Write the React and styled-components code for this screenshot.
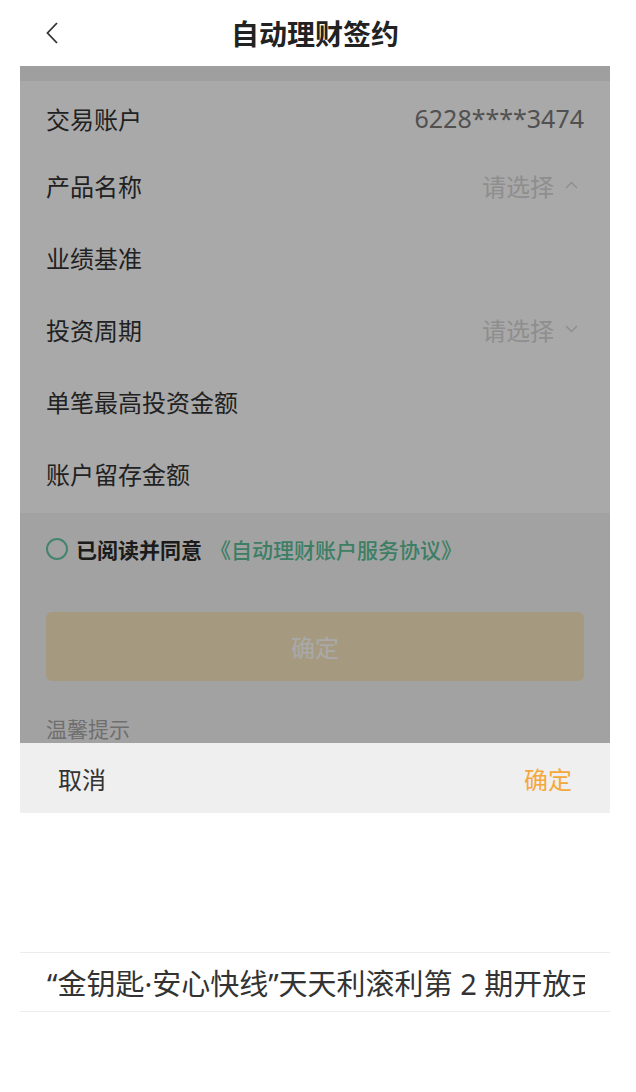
import React from 'react'
import styled, { createGlobalStyle } from 'styled-components'

const GlobalStyle = createGlobalStyle`
  body {
    margin: 0;
    background: #fff;
    font-family: "Noto Sans CJK SC", "Noto Sans", sans-serif;
  }
`

const Phone = styled.div`
  position: relative;
  width: 590px;
  height: 1092px;
  margin-left: 20px;
  overflow: hidden;
  background: #fff;
`

const Header = styled.header`
  position: relative;
  height: 66px;
  display: flex;
  align-items: center;
  justify-content: center;
  background: #fff;
`

const BackBtn = styled.button`
  position: absolute;
  left: 25px;
  top: 21px;
  padding: 0;
  border: 0;
  background: none;
  display: flex;
`

const Title = styled.h1`
  margin: 0;
  font-size: 28px;
  font-weight: 700;
  color: #222;
`

const Form = styled.section`
  border-top: 15px solid #f0f0f0;
  background: #fff;
`

const Row = styled.div`
  height: 72px;
  padding: 0 26px;
  display: flex;
  align-items: center;
  justify-content: space-between;
  box-sizing: border-box;

  &:first-child {
    height: 68px;
    padding-top: 6px;
  }
  &:last-child {
    height: 76px;
    padding-bottom: 4px;
  }
`

const Label = styled.span`
  font-size: 24px;
  color: #333;
`

const Value = styled.span`
  display: flex;
  align-items: center;
  gap: 11px;
  font-size: ${p => (p.$num ? '25px' : '24px')};
  font-family: ${p => (p.$num ? '"Noto Sans", sans-serif' : 'inherit')};
  color: ${p => (p.$muted ? '#d6d6d6' : '#7a7a7a')};
`

const CaretBox = styled.span`
  display: flex;
  padding-right: 6px;
`

const AgreeSection = styled.section`
  background: #f5f5f5;
  padding: 21px 26px 0;
`

const AgreeRow = styled.div`
  display: flex;
  align-items: center;
  gap: 8px;
  font-size: 21px;
`

const Circle = styled.span`
  width: 18px;
  height: 18px;
  border: 2px solid #66c7a8;
  border-radius: 50%;
`

const AgreeText = styled.span`
  font-weight: 700;
  color: #2a2a2a;
`

const Link = styled.span`
  color: #5cbf98;
  font-weight: 500;
`

const SubmitBtn = styled.button`
  width: 100%;
  height: 69px;
  margin-top: 48px;
  border: 0;
  border-radius: 6px;
  background: #f9e8c1;
  color: #fff;
  font-family: inherit;
  font-size: 24px;
`

const Tips = styled.p`
  margin: 32px 0 0;
  font-size: 21px;
  color: #a8a8a8;
`

const Mask = styled.div`
  position: absolute;
  top: 66px;
  left: 0;
  right: 0;
  bottom: 0;
  background: rgba(0, 0, 0, 0.337);
`

const Sheet = styled.div`
  position: absolute;
  top: 743px;
  left: 0;
  right: 0;
  bottom: 0;
  background: #fff;
`

const SheetBar = styled.div`
  height: 70px;
  padding: 0 38px;
  display: flex;
  align-items: center;
  justify-content: space-between;
  background: #efefef;
`

const SheetAction = styled.span`
  font-size: 24px;
  color: ${p => (p.$primary ? '#f5a83a' : '#333')};
`

const Picker = styled.div`
  padding-top: 139px;
`

const PickerItem = styled.div`
  height: 58px;
  display: flex;
  align-items: center;
  border-top: 1px solid #ececec;
  border-bottom: 1px solid #ececec;
`

const PickerText = styled.span`
  display: block;
  margin: 0 25px 0 27px;
  overflow: hidden;
  white-space: nowrap;
  font-family: "Noto Sans", "Noto Sans CJK SC", sans-serif;
  font-size: 29px;
  color: #333;
`

const Caret = ({ up }) => (
  <CaretBox>
    <svg width="13" height="8" viewBox="0 0 13 8">
      <path
        d={up ? 'M1 7 L6.5 1.5 L12 7' : 'M1 1 L6.5 6.5 L12 1'}
        fill="none"
        stroke="#d6d6d6"
        strokeWidth="1.4"
      />
    </svg>
  </CaretBox>
)

const rows = [
  { label: '交易账户', value: '6228****3474', num: true },
  { label: '产品名称', value: '请选择', caret: 'up' },
  { label: '业绩基准' },
  { label: '投资周期', value: '请选择', caret: 'down' },
  { label: '单笔最高投资金额' },
  { label: '账户留存金额' },
]

const App = () => {
  return (
    <Phone>
      <GlobalStyle />
      <Header>
        <BackBtn>
          <svg width="14" height="24" viewBox="0 0 14 24">
            <path d="M12 2 L2.5 12 L12 22" fill="none" stroke="#333" strokeWidth="1.8" />
          </svg>
        </BackBtn>
        <Title>自动理财签约</Title>
      </Header>

      <Form>
        {rows.map(r => (
          <Row key={r.label}>
            <Label>{r.label}</Label>
            {r.value && (
              <Value $num={r.num} $muted={!!r.caret}>
                {r.value}
                {r.caret && <Caret up={r.caret === 'up'} />}
              </Value>
            )}
          </Row>
        ))}
      </Form>

      <AgreeSection>
        <AgreeRow>
          <Circle />
          <AgreeText>已阅读并同意</AgreeText>
          <Link>《自动理财账户服务协议》</Link>
        </AgreeRow>
        <SubmitBtn>确定</SubmitBtn>
        <Tips>温馨提示</Tips>
      </AgreeSection>

      <Mask />

      <Sheet>
        <SheetBar>
          <SheetAction>取消</SheetAction>
          <SheetAction $primary>确定</SheetAction>
        </SheetBar>
        <Picker>
          <PickerItem>
            <PickerText>“金钥匙·安心快线”天天利滚利第 2 期开放式理财产品</PickerText>
          </PickerItem>
        </Picker>
      </Sheet>
    </Phone>
  )
}

export default App
